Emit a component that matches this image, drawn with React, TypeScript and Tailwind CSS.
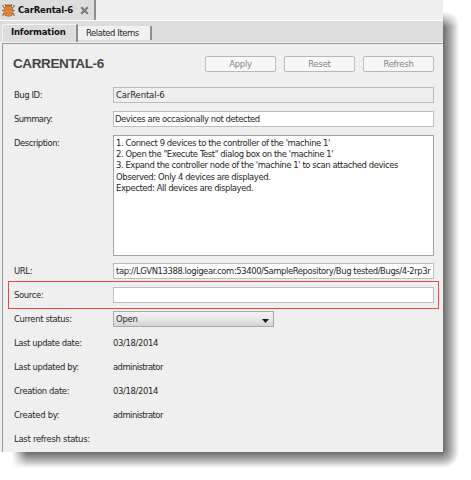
import type { ReactNode } from 'react';

function BugIcon() {
  return (
    <svg width="13" height="14" viewBox="0 0 13 14" className="shrink-0">
      <g stroke="#6b6055" strokeWidth="1" fill="none">
        <path d="M3.8 3 3 1M9.2 3 10 1M3 5 1 3.8V2M10 5l2-1.2V2M2.5 7.5H.2M10.5 7.5h2.3M3 10l-2 1v2M10 10l2 1v2" />
      </g>
      <rect x="3.6" y="1.6" width="5.8" height="4" rx="2" fill="#9a5c28" />
      <rect x="2.1" y="3" width="8.8" height="10.2" rx="3.8" fill="#e58a34" stroke="#b4651f" strokeWidth=".8" />
      <path d="M6.5 4v8.4" stroke="#cf7826" strokeWidth=".6" />
      <g fill="#bf6820">
        <circle cx="4.5" cy="6.3" r=".7" />
        <circle cx="8.5" cy="6.3" r=".7" />
        <circle cx="4.5" cy="9.7" r=".7" />
        <circle cx="8.5" cy="9.7" r=".7" />
      </g>
    </svg>
  );
}

function Row({ label, track = '', children }: { label: string; track?: string; children?: ReactNode }) {
  return (
    <div className="flex h-6 items-center">
      <div className={`w-[99px] shrink-0 ${track}`}>{label}</div>
      {children}
    </div>
  );
}

const field = 'flex h-4 w-[321px] items-center overflow-hidden border border-[#b9bdc4]';

function Button({ children }: { children: string }) {
  return (
    <button className="h-4 w-[71px] rounded-[2px] border border-[#b8b8b8] bg-[#f7f7f7] text-center leading-[14px] tracking-[-0.25px] text-[#858585]">
      {children}
    </button>
  );
}

export default function App() {
  return (
    <div className="relative h-[480px] w-[471px] overflow-hidden bg-white font-['DejaVu_Sans_Condensed','DejaVu_Sans',sans-serif] text-[9.4px] leading-[11.2px] tracking-[-0.36px] whitespace-nowrap text-[#262626] [font-stretch:condensed]">
      <div className="absolute top-[12px] left-[443px] h-[440px] w-[16px] rounded-tr-[14px] bg-linear-to-r from-[#6c6c6c] via-[#b0b0b0] to-white" />
      <div className="absolute top-[12px] left-[443px] h-[15px] w-[16px] bg-linear-to-b from-white to-transparent" />
      <div className="absolute top-[452px] left-[12px] h-[16px] w-[431px] bg-linear-to-b from-[#6c6c6c] via-[#b0b0b0] to-white" />
      <div className="absolute top-[452px] left-[12px] h-[16px] w-[15px] bg-linear-to-r from-white to-transparent" />
      <div className="absolute top-[452px] left-[443px] size-4 bg-[radial-gradient(circle_16px_at_top_left,#7c7c7c,#b4b4b4_50%,#fff_100%)]" />

      <main className="relative flex h-[452px] w-[443px] flex-col overflow-hidden bg-[#efefef]">
        <header className="h-[20px]">
          <div className="flex h-[20px] w-[96px] items-center border-r-2 border-[#8d8d8d] bg-[#dddddd] pl-[2px]">
            <BugIcon />
            <span className="ml-[3px] w-[62px] text-[9.5px] font-bold tracking-[-0.18px] text-[#111]">CarRental-6</span>
            <svg width="9" height="9" viewBox="0 0 9 9">
              <path d="m1.2 1.2 6.6 6.6m0-6.6L1.2 7.8" stroke="#7b7b7b" strokeWidth="2.2" />
            </svg>
          </div>
        </header>
        <nav className="flex h-[23px] items-end border-t border-b border-t-white border-b-[#f4f4f4] bg-[#dddddd] pl-[2px]">
          <div className="h-[18px] w-[76px] rounded-tl-[3px] border-t border-r-2 border-l border-t-[#f4f4f4] border-r-[#8d8d8d] border-l-[#f4f4f4] pl-[8px] text-[9.5px] leading-[14px] font-bold tracking-[-0.2px] text-[#111]">Information</div>
          <div className="mb-[2px] h-[14px] w-[74px] border-r-2 border-[#8d8d8d] bg-[#f1f1f1] pl-[8px] leading-[14px] tracking-[-0.42px]">Related Items</div>
        </nav>
        <section className="ml-[2px] grow border-t border-l border-[#999] pl-[11px]">
          <div className="flex h-[39px] items-center pt-[1px]">
            <h1 className="-ml-px w-[192px] font-['Liberation_Sans',Arial,sans-serif] text-[13.5px] leading-4 font-bold tracking-[-0.38px] text-[#454545]">CARRENTAL-6</h1>
            <div className="flex gap-2">
              <Button>Apply</Button>
              <Button>Reset</Button>
              <Button>Refresh</Button>
            </div>
          </div>
          <Row label="Bug ID:" track="tracking-[-0.42px]"><div className={`${field} bg-[#efefef] pl-[2px] tracking-[-0.1px]`}>CarRental-6</div></Row>
          <Row label="Summary:" track="tracking-[-0.58px]"><div className={`${field} bg-white pl-[1px] tracking-[-0.43px]`}>Devices are occasionally not detected</div></Row>
          <div className="flex h-[128px] pt-[4px]">
            <div className="w-[99px] pt-[2px] tracking-[-0.45px]">Description:</div>
            <div className="h-[121px] w-[321px] border border-[#a0a4aa] bg-white pt-[1px] pl-[2px] tracking-[-0.42px]">
              <p>1. Connect 9 devices to the controller of the 'machine 1'</p>
              <p>2. Open the "Execute Test" dialog box on the 'machine 1'</p>
              <p>3. Expand the controller node of the 'machine 1' to scan attached devices</p>
              <p className="tracking-[-0.41px]">Observed: Only 4 devices are displayed.</p>
              <p className="tracking-[-0.42px]">Expected: All devices are displayed.</p>
            </div>
          </div>
          <Row label="URL:"><div className={`${field} bg-white pl-[2px] tracking-[-0.41px]`}>tap://LGVN13388.logigear.com:53400/SampleRepository/Bug tested/Bugs/4-2rp3r</div></Row>
          <div className="relative">
            <Row label="Source:"><div className={`${field} bg-white`} /></Row>
            <div className="absolute -top-[2px] -left-[6px] h-[28px] w-[431px] border border-[#ee4840]" />
          </div>
          <Row label="Current status:">
            <div className="flex h-4 w-[161px] items-center justify-between border border-[#a9a9a9] bg-linear-to-b from-[#f2f2f2] via-[#e8e8e8] to-[#d4d4d4] pr-[4px] pl-[2px]">
              <span className="tracking-[-0.2px]">Open</span>
              <svg width="7" height="4" viewBox="0 0 7 4" className="mt-[3px]"><path d="M0 0h7L3.5 4Z" fill="#1b1724" /></svg>
            </div>
          </Row>
          <Row label="Last update date:" track="tracking-[-0.4px]">03/18/2014</Row>
          <Row label="Last updated by:"><span className="tracking-[-0.55px]">administrator</span></Row>
          <Row label="Creation date:">03/18/2014</Row>
          <Row label="Created by:" track="tracking-[-0.3px]"><span className="tracking-[-0.55px]">administrator</span></Row>
          <Row label="Last refresh status:" track="tracking-[-0.27px]" />
        </section>
      </main>
    </div>
  );
}
